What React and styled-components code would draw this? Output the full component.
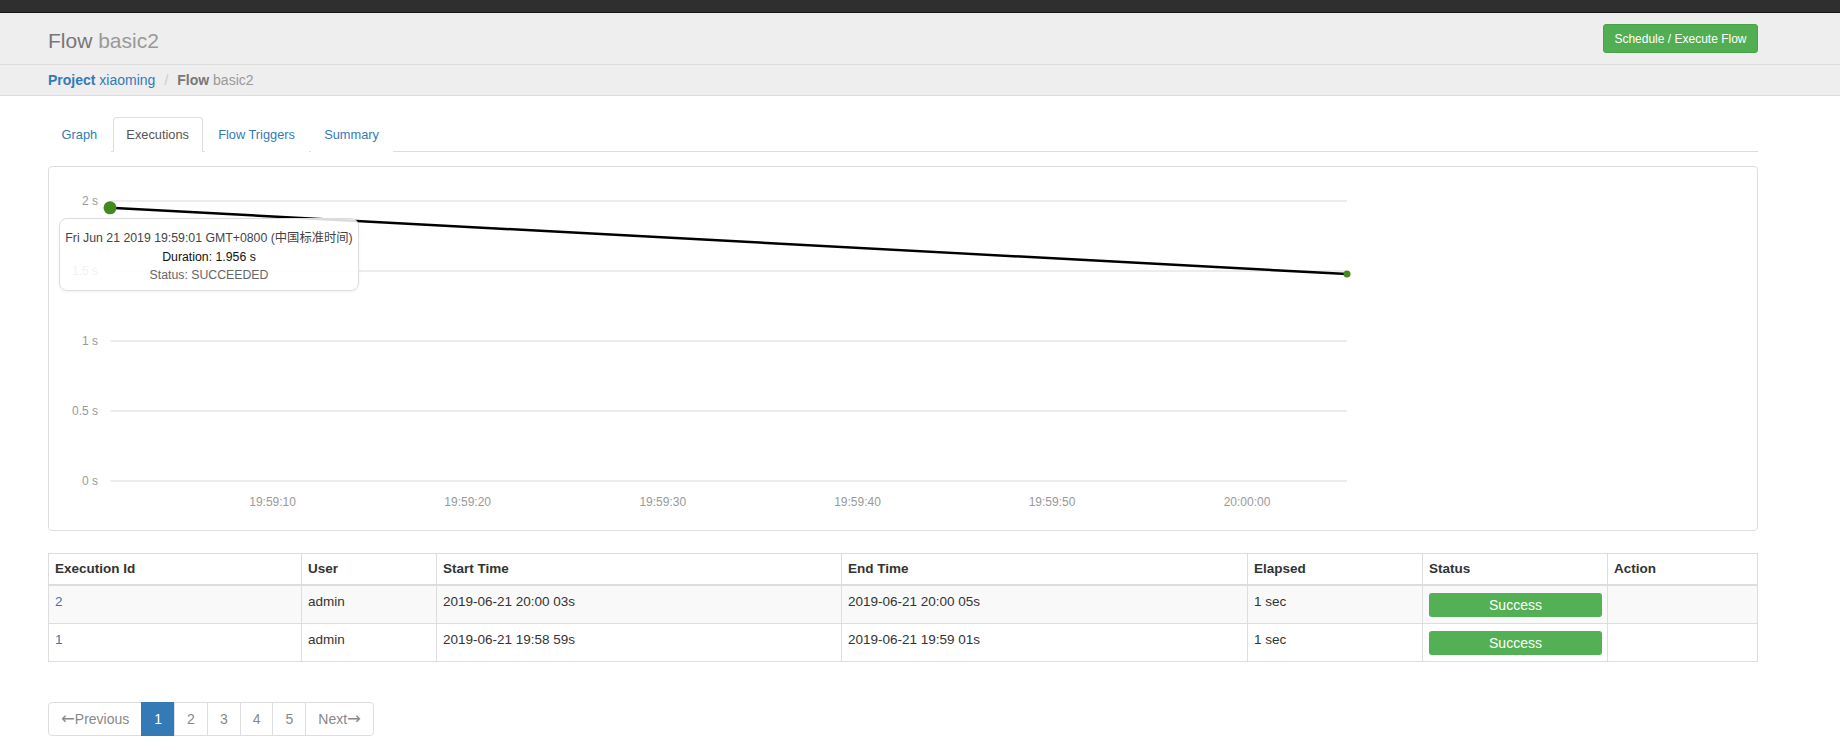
import React from "react";
import styled, { createGlobalStyle } from "styled-components";

const GlobalStyle = createGlobalStyle`
  html, body { margin: 0; padding: 0; background: #fff; }
  body {
    font-family: "Liberation Sans", Arial, "Noto Sans CJK SC", sans-serif;
    color: #333;
    font-size: 14px;
  }
  * { box-sizing: border-box; }
`;

const TopBar = styled.div`
  height: 13px;
  background: #2f2f2f;
  border-bottom: 1px solid #151515;
`;

const Header = styled.header`
  height: 52px;
  background: #eeeeee;
  border-bottom: 1px solid #dcdcdc;
  display: flex;
  align-items: center;
  justify-content: space-between;
  padding: 0 82px 0 48px;
`;

const Title = styled.h1`
  margin: 0;
  font-size: 21px;
  font-weight: normal;
  color: #777;
  line-height: 1;
  padding-top: 3px;
`;

const Sub = styled.span`
  color: #999;
`;

const ActionButton = styled.button`
  height: 29px;
  padding: 0 10.5px;
  font-family: inherit;
  font-size: 12px;
  color: #fff;
  background: #52ae52;
  border: 1px solid #4aa04a;
  border-radius: 3px;
`;

const Crumbs = styled.div`
  height: 31px;
  background: #eeeeee;
  border-bottom: 1px solid #dcdcdc;
  display: flex;
  align-items: center;
  padding-left: 48px;
  font-size: 14px;
`;

const CrumbLink = styled.a`
  color: #337ab7;
  text-decoration: none;
  b { font-weight: bold; }
`;

const CrumbSep = styled.span`
  color: #ccc;
  padding: 0 9px;
`;

const CrumbCurrent = styled.span`
  color: #999;
  b { color: #777; font-weight: bold; }
`;

const Content = styled.main`
  padding: 21px 82px 0 48px;
`;

const Tabs = styled.ul`
  list-style: none;
  margin: 0;
  padding: 0;
  display: flex;
  border-bottom: 1px solid #ddd;
`;

const Tab = styled.li`
  margin-right: 2px;
  margin-bottom: -1px;
  padding: 8px 12.6px;
  line-height: 17px;
  font-size: 12.8px;
  border: 1px solid ${(p) => (p.$active ? "#ddd" : "transparent")};
  border-bottom-color: ${(p) => (p.$active ? "#fff" : "transparent")};
  border-radius: 4px 4px 0 0;
  background: #fff;
  color: ${(p) => (p.$active ? "#555" : "#337ab7")};
`;

const ChartPanel = styled.div`
  position: relative;
  margin-top: 14px;
  height: 365px;
  border: 1px solid #ddd;
  border-radius: 4px;
  overflow: hidden;
`;

const ChartSvg = styled.svg`
  display: block;
  font-family: "Liberation Sans", Arial, sans-serif;
`;

const Tooltip = styled.div`
  position: absolute;
  left: 10px;
  top: 51px;
  width: 300px;
  height: 73px;
  padding-top: 10px;
  background: rgba(255, 255, 255, 0.86);
  border: 1px solid #ddd;
  border-radius: 8px;
  box-shadow: 0 1px 3px rgba(0, 0, 0, 0.06);
  text-align: center;
  font-size: 12.3px;
  line-height: 18.5px;
`;

const TipLine = styled.div`
  color: ${(p) => p.$color};
  white-space: nowrap;
`;

const Table = styled.table`
  margin-top: 22px;
  width: 100%;
  border-collapse: collapse;
  table-layout: fixed;
  border: 1px solid #ddd;
  font-size: 13.5px;
`;

const Th = styled.th`
  width: ${(p) => p.$w}px;
  text-align: left;
  font-weight: bold;
  color: #333;
  padding: 6px 6px;
  line-height: 18px;
  border: 1px solid #ddd;
  border-bottom: 2px solid #ddd;
`;

const Tr = styled.tr`
  background: ${(p) => (p.$striped ? "#f9f9f9" : "#fff")};
`;

const Td = styled.td`
  padding: 6px 5px 6px 6px;
  line-height: 20px;
  vertical-align: top;
  border: 1px solid #ddd;
  color: #333;
`;

const IdLink = styled.a`
  color: #337ab7;
  text-decoration: none;
`;

const StatusLabel = styled.span`
  display: block;
  height: 24px;
  margin-top: 1px;
  line-height: 24px;
  background: #54b054;
  border-radius: 3px;
  color: #fff;
  text-align: center;
  font-size: 14px;
`;

const Pager = styled.ul`
  list-style: none;
  margin: 40px 0 0;
  padding: 0;
  display: flex;
`;

const PageItem = styled.li`
  height: 34px;
  padding: 6px 12px;
  line-height: 20px;
  font-size: 14px;
  border: 1px solid ${(p) => (p.$active ? "#337ab7" : "#ddd")};
  margin-left: -1px;
  background: ${(p) => (p.$active ? "#337ab7" : "#fff")};
  color: ${(p) => (p.$active ? "#fff" : "#888")};
  white-space: nowrap;
  &:first-child { margin-left: 0; border-radius: 4px 0 0 4px; }
  &:last-child { border-radius: 0 4px 4px 0; }
`;

const Arrow = styled.span`
  font-family: "DejaVu Sans", sans-serif;
  font-size: 16.5px;
  line-height: 1;
`;

const yTicks = [
  { label: "2 s", y: 34 },
  { label: "1.5 s", y: 104 },
  { label: "1 s", y: 174 },
  { label: "0.5 s", y: 244 },
  { label: "0 s", y: 314 },
];

const xTicks = [
  { label: "19:59:10", x: 223.6 },
  { label: "19:59:20", x: 418.7 },
  { label: "19:59:30", x: 613.8 },
  { label: "19:59:40", x: 808.5 },
  { label: "19:59:50", x: 1003 },
  { label: "20:00:00", x: 1198 },
];

const points = [
  { x: 61, y: 40.8, r: 6.5 },
  { x: 1298, y: 107, r: 3.5 },
];

const columns = [
  { name: "Execution Id", w: 253 },
  { name: "User", w: 135 },
  { name: "Start Time", w: 405 },
  { name: "End Time", w: 406 },
  { name: "Elapsed", w: 175 },
  { name: "Status", w: 185 },
  { name: "Action", w: 150 },
];

const rows = [
  { id: "2", user: "admin", start: "2019-06-21 20:00 03s", end: "2019-06-21 20:00 05s", elapsed: "1 sec" },
  { id: "1", user: "admin", start: "2019-06-21 19:58 59s", end: "2019-06-21 19:59 01s", elapsed: "1 sec" },
];

const pages = [
  { key: "prev", pre: "←", text: "Previous" },
  { key: "1", text: "1", active: true },
  { key: "2", text: "2" },
  { key: "3", text: "3" },
  { key: "4", text: "4" },
  { key: "5", text: "5" },
  { key: "next", text: "Next", post: "→" },
];

export default function App() {
  return (
    <>
      <GlobalStyle />
      <TopBar />
      <Header>
        <Title>
          Flow <Sub>basic2</Sub>
        </Title>
        <ActionButton>Schedule / Execute Flow</ActionButton>
      </Header>
      <Crumbs>
        <CrumbLink href="#">
          <b>Project</b> xiaoming
        </CrumbLink>
        <CrumbSep>/</CrumbSep>
        <CrumbCurrent>
          <b>Flow</b> basic2
        </CrumbCurrent>
      </Crumbs>
      <Content>
        <Tabs>
          <Tab>Graph</Tab>
          <Tab $active>Executions</Tab>
          <Tab>Flow Triggers</Tab>
          <Tab>Summary</Tab>
        </Tabs>
        <ChartPanel>
          <ChartSvg width="1708" height="363" viewBox="0 0 1708 363">
            {yTicks.map((t) => (
              <g key={t.label}>
                <line x1="61.5" x2="1298" y1={t.y} y2={t.y} stroke="#e6e6e6" strokeWidth="1.5" />
                <text x="49" y={t.y + 4} textAnchor="end" fontSize="12" fill="#999">
                  {t.label}
                </text>
              </g>
            ))}
            {xTicks.map((t) => (
              <text key={t.label} x={t.x} y="339" textAnchor="middle" fontSize="12" fill="#999">
                {t.label}
              </text>
            ))}
            <line x1={points[0].x} y1={points[0].y} x2={points[1].x} y2={points[1].y} stroke="#000" strokeWidth="2.5" />
            {points.map((p) => (
              <circle key={p.x} cx={p.x} cy={p.y} r={p.r} fill="#44891f" />
            ))}
          </ChartSvg>
          <Tooltip>
            <TipLine $color="#444">Fri Jun 21 2019 19:59:01 GMT+0800 (中国标准时间)</TipLine>
            <TipLine $color="#111">Duration: 1.956 s</TipLine>
            <TipLine $color="#666">Status: SUCCEEDED</TipLine>
          </Tooltip>
        </ChartPanel>
        <Table>
          <thead>
            <tr>
              {columns.map((c) => (
                <Th key={c.name} $w={c.w}>
                  {c.name}
                </Th>
              ))}
            </tr>
          </thead>
          <tbody>
            {rows.map((r, i) => (
              <Tr key={r.id} $striped={i % 2 === 0}>
                <Td>
                  <IdLink href="#">{r.id}</IdLink>
                </Td>
                <Td>{r.user}</Td>
                <Td>{r.start}</Td>
                <Td>{r.end}</Td>
                <Td>{r.elapsed}</Td>
                <Td>
                  <StatusLabel>Success</StatusLabel>
                </Td>
                <Td />
              </Tr>
            ))}
          </tbody>
        </Table>
        <Pager>
          {pages.map((p) => (
            <PageItem key={p.key} $active={p.active}>
              {p.pre && <Arrow>{p.pre}</Arrow>}
              {p.text}
              {p.post && <Arrow>{p.post}</Arrow>}
            </PageItem>
          ))}
        </Pager>
      </Content>
    </>
  );
}
